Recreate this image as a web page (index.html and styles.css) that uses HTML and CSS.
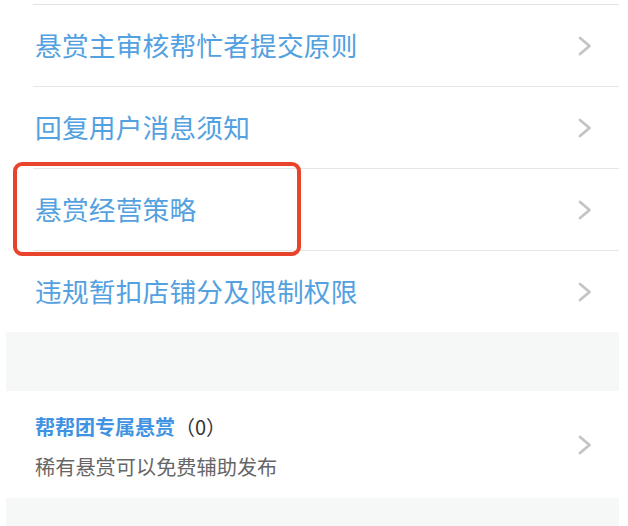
FILE: index.html
```html
<!DOCTYPE html>
<html lang="zh-CN">
<head>
    <meta charset="UTF-8">
    <meta name="viewport" content="width=device-width, initial-scale=1.0">
    <title>悬赏规则</title>
    <link rel="stylesheet" href="styles.css">
</head>
<body>
    <div class="page">
        <div class="rule-list">
            <div class="rule-item">
                <span class="rule-title">悬赏主审核帮忙者提交原则</span>
                <span class="chevron"><svg width="14" height="20" viewBox="0 0 14 20"><path d="M2 2 L11.5 10 L2 18" fill="none" stroke="#c4c4c4" stroke-width="2.8" stroke-linecap="round" stroke-linejoin="round"/></svg></span>
            </div>
            <div class="rule-item">
                <span class="rule-title">回复用户消息须知</span>
                <span class="chevron"><svg width="14" height="20" viewBox="0 0 14 20"><path d="M2 2 L11.5 10 L2 18" fill="none" stroke="#c4c4c4" stroke-width="2.8" stroke-linecap="round" stroke-linejoin="round"/></svg></span>
            </div>
            <div class="rule-item">
                <span class="rule-title">悬赏经营策略</span>
                <span class="chevron"><svg width="14" height="20" viewBox="0 0 14 20"><path d="M2 2 L11.5 10 L2 18" fill="none" stroke="#c4c4c4" stroke-width="2.8" stroke-linecap="round" stroke-linejoin="round"/></svg></span>
            </div>
            <div class="rule-item">
                <span class="rule-title">违规暂扣店铺分及限制权限</span>
                <span class="chevron"><svg width="14" height="20" viewBox="0 0 14 20"><path d="M2 2 L11.5 10 L2 18" fill="none" stroke="#c4c4c4" stroke-width="2.8" stroke-linecap="round" stroke-linejoin="round"/></svg></span>
            </div>
        </div>

        <div class="gap"></div>

        <div class="team-card">
            <div class="team-text">
                <div class="team-title"><strong>帮帮团专属悬赏</strong><span class="count">（0）</span></div>
                <div class="team-sub">稀有悬赏可以免费辅助发布</div>
            </div>
            <span class="chevron"><svg width="14" height="20" viewBox="0 0 14 20"><path d="M2 2 L11.5 10 L2 18" fill="none" stroke="#c4c4c4" stroke-width="2.8" stroke-linecap="round" stroke-linejoin="round"/></svg></span>
        </div>

        <!-- annotation box drawn over the third row -->
        <div class="highlight"></div>
    </div>
</body>
</html>
```

FILE: styles.css
```css
body {
    margin: 0;
    background: #ffffff;
    font-family: "Noto Sans CJK SC", "Noto Sans", sans-serif;
}
.page {
    position: relative;
    margin: 0 9px 0 6px;
    height: 526px;
    background: #f6f7f7;
    overflow: hidden;
}
.rule-list {
    background: #ffffff;
    padding-top: 4px;
}
.rule-item {
    display: flex;
    align-items: center;
    justify-content: space-between;
    height: 81px;
    margin-left: 27px;
    padding: 0 27px 0 2px;
    border-top: 1px solid #e6e6e6;
}
.rule-item:first-child {
    border-top-color: #e2e2e2;
}
.rule-title {
    font-size: 26.7px;
    color: #53a1e0;
    line-height: 1;
    letter-spacing: 0.2px;
}
.chevron {
    display: flex;
    width: 14px;
    height: 20px;
}
.gap {
    height: 59px;
}
.team-card {
    display: flex;
    align-items: center;
    justify-content: space-between;
    background: #ffffff;
    height: 107px;
    padding: 0 27px 0 29px;
    box-sizing: border-box;
}
.team-text {
    display: flex;
    flex-direction: column;
    gap: 12px;
    padding-top: 4px;
}
.team-title {
    font-size: 20px;
    line-height: 28px;
}
.team-title strong {
    color: #3f93e2;
    font-weight: 700;
}
.count {
    color: #333333;
}
.team-sub {
    font-size: 20.2px;
    line-height: 28px;
    color: #666666;
}
.highlight {
    position: absolute;
    left: 7px;
    top: 162px;
    width: 280px;
    height: 86px;
    border: 4px solid #e8432b;
    border-radius: 9px;
}
```
